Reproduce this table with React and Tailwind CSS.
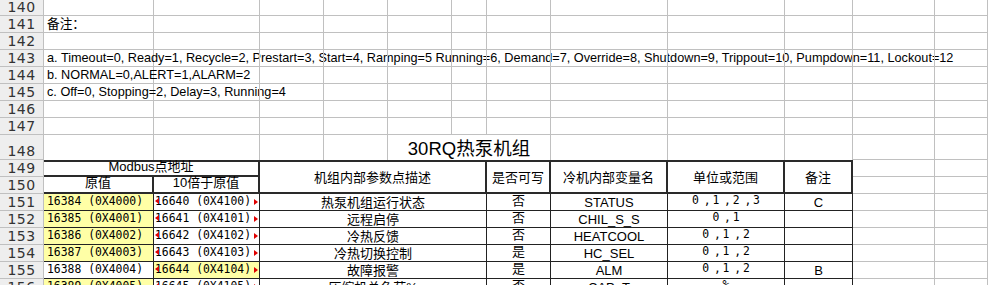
import React from "react";

const GRID = "grid grid-cols-[44px_110px_106px_64px_64px_64px_35px_64px_117px_117px_68px_82px_1fr] grid-rows-[16px_repeat(7,17px)_25px_repeat(8,17px)]";
const SANS = "font-['Liberation_Sans','Noto_Sans_CJK_SC',sans-serif]";
const MONO = "font-['DejaVu_Sans_Mono',monospace]";

const notes = {
    141: "备注：",
    143: "a. Timeout=0, Ready=1, Recycle=2, Prestart=3, Start=4, Ramping=5 Running=6, Demand=7, Override=8, Shutdown=9, Trippout=10, Pumpdown=11, Lockout=12",
    144: "b. NORMAL=0,ALERT=1,ALARM=2",
    145: "c. Off=0, Stopping=2, Delay=3, Running=4",
};

const rows = [
    { n: 151, a: "16384 (0X4000)", b: "16640 (0X4100)", desc: "热泵机组运行状态", rw: "否", v: "STATUS", unit: ["0", "1", "2", "3"], note: "C", ya: true },
    { n: 152, a: "16385 (0X4001)", b: "16641 (0X4101)", desc: "远程启停", rw: "否", v: "CHIL_S_S", unit: ["0", "1"], note: "", ya: true },
    { n: 153, a: "16386 (0X4002)", b: "16642 (0X4102)", desc: "冷热反馈", rw: "否", v: "HEATCOOL", unit: ["0", "1", "2"], note: "", ya: true },
    { n: 154, a: "16387 (0X4003)", b: "16643 (0X4103)", desc: "冷热切换控制", rw: "是", v: "HC_SEL", unit: ["0", "1", "2"], note: "", ya: true },
    { n: 155, a: "16388 (0X4004)", b: "16644 (0X4104)", desc: "故障报警", rw: "是", v: "ALM", unit: ["0", "1", "2"], note: "B", yb: true },
    { n: 156, a: "16389 (0X4005)", b: "16645 (0X4105)", desc: "压缩机总负荷%", rw: "否", v: "CAP_T", unit: ["%"], note: "", ya: true },
];

const RowHead = ({ n }) => (
    <div className="flex items-end justify-center overflow-hidden border-r border-b border-[#c0c0c0] bg-[#eeeeee] pb-[1px] font-['DejaVu_Sans',sans-serif] text-[14px] leading-none tracking-[0.5px] text-[#333]">
        {n}
    </div>
);

const Gray = ({ className = "", children }) => (
    <div className={`border-r border-b border-[#c0c0c0] ${className}`}>{children}</div>
);

// thin dark border for the data cells
const Td = ({ className = "", mono, children }) => (
    <div className={`flex items-center justify-center overflow-hidden whitespace-nowrap border-r border-b border-[#222] leading-none text-black ${mono ? `${MONO} text-[11.4px]` : `${SANS} text-[13px]`} ${className}`}>
        {children}
    </div>
);

// thick header cell
const Th = ({ className = "", children }) => (
    <div className={`flex justify-center whitespace-nowrap border-r-2 border-b-2 border-[#2a2a2a] text-[13px] text-black ${SANS} ${className}`}>
        {children}
    </div>
);

const Unit = ({ parts }) => (
    <span className={`${MONO} text-[11.4px] leading-none`}>
        {parts.map((p, i) => (
            <React.Fragment key={i}>
                {i > 0 && <span className="inline-block w-[13.5px] pl-[3px] text-center">,</span>}
                {p}
            </React.Fragment>
        ))}
    </span>
);

export default function App() {
    return (
        <div className="h-[285px] w-[988px] overflow-hidden bg-white">
            <div className={GRID}>
                {/* upper notes area */}
                {[140, 141, 142, 143, 144, 145, 146, 147].map(n => (
                    <React.Fragment key={n}>
                        <RowHead n={n} />
                        <Gray className={`flex items-end whitespace-nowrap pb-[1px] pl-[3px] text-[12.7px] leading-none text-black ${SANS}`}>
                            {notes[n] || ""}
                        </Gray>
                        {Array.from({ length: 11 }).map((_, i) => <Gray key={i} />)}
                    </React.Fragment>
                ))}

                {/* row 148 with the title */}
                <RowHead n={148} />
                <Gray className="border-b-0" />
                <Gray className="border-b-0" />
                <Gray className="border-b-0" />
                <Gray className="border-b-0" />
                <Gray className={`col-span-3 flex items-end justify-center border-b-0 pb-[2px] text-[18.5px] leading-none text-black ${SANS}`}>
                    30RQ热泵机组
                </Gray>
                <Gray className="border-b-0" />
                <Gray className="border-b-0" />
                <Gray className="border-b-0" />
                <Gray />
                <Gray />

                {/* table header */}
                <RowHead n={149} />
                <Th className="col-span-2 items-start border-t-2 leading-[10px]">Modbus点地址</Th>
                <Th className="col-span-4 row-span-2 items-center border-t-2 leading-none">机组内部参数点描述</Th>
                <Th className="row-span-2 items-center border-t-2 leading-none">是否可写</Th>
                <Th className="row-span-2 items-center border-t-2 leading-none">冷机内部变量名</Th>
                <Th className="row-span-2 items-center border-t-2 leading-none">单位或范围</Th>
                <Th className="row-span-2 items-center border-t-2 leading-none">备注</Th>
                <Gray />
                <Gray />

                <RowHead n={150} />
                <Th className="items-start leading-[11px]">原值</Th>
                <Th className="items-start leading-[11px]">10倍于原值</Th>
                <Gray />
                <Gray />

                {/* data rows */}
                {rows.map(r => (
                    <React.Fragment key={r.n}>
                        <RowHead n={r.n} />
                        <Td mono className={`justify-start pl-[3px] ${r.ya ? "bg-[#ffffa6]" : ""}`}>{r.a}</Td>
                        <Td mono className={`relative justify-start pl-[1px] ${r.yb ? "bg-[#ffffa6]" : ""}`}>
                            {r.b}
                            <span className="absolute left-[1px] top-[4px] h-0 w-0 border-y-[3px] border-r-[4px] border-y-transparent border-r-[#e00000]" />
                            <span className="absolute right-[1px] top-[5px] h-0 w-0 border-y-[3px] border-l-[4px] border-y-transparent border-l-[#e00000]" />
                        </Td>
                        <Td className="col-span-4 pt-[1px]">{r.desc}</Td>
                        <Td className="items-start">{r.rw}</Td>
                        <Td className="text-[12.2px]">{r.v}</Td>
                        <Td className="items-start pt-[1px]"><Unit parts={r.unit} /></Td>
                        <Td className="text-[12.2px]">{r.note}</Td>
                        <Gray />
                        <Gray />
                    </React.Fragment>
                ))}
            </div>
        </div>
    );
}
